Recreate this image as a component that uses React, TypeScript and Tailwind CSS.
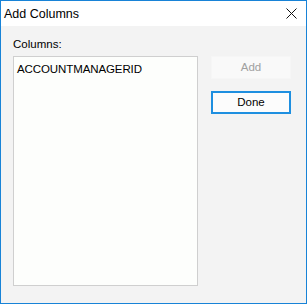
export default function App() {
  return (
    <div
      className="w-[307px] h-[304px] border border-[#1883d7] flex flex-col text-black"
      style={{ fontFamily: '"Liberation Sans", Arial, sans-serif' }}
    >
      {/* Title bar */}
      <div className="h-[25px] bg-white flex items-center justify-between pl-[3px] pr-[9px]">
        <span className="text-[12.5px] leading-none pt-[1px]">Add Columns</span>
        <svg width="11" height="11" viewBox="0 0 11 11" aria-hidden="true">
          <path d="M0.5 0.5L10.5 10.5M10.5 0.5L0.5 10.5" stroke="#111" strokeWidth="1" />
        </svg>
      </div>

      {/* Body */}
      <div className="flex-1 bg-[#f3f3f3] flex pl-[12px] pt-[11px]">
        <div className="flex flex-col w-[185px]">
          <div className="text-[11.5px] leading-[15px] h-[15px] mb-[4px]">Columns:</div>
          <div className="h-[230px] bg-[#fdfefc] border border-[#cfcfcf] pl-[3px] pt-[5px]">
            <div className="text-[11.5px] leading-[15px] tracking-[-0.1px]">ACCOUNTMANAGERID</div>
          </div>
        </div>
        <div className="flex flex-col ml-[13px] w-[80px] pt-[19px] gap-[12px]">
          <button
            type="button"
            disabled
            className="h-[23px] bg-[#f9f9f9] border border-[#f6f6f6] text-[11.5px] text-[#a0a0a0]"
          >
            Add
          </button>
          <button
            type="button"
            className="h-[23px] bg-[#fcfcfc] border-2 border-[#1e8fe0] text-[11.5px] text-black"
          >
            Done
          </button>
        </div>
      </div>
    </div>
  );
}
